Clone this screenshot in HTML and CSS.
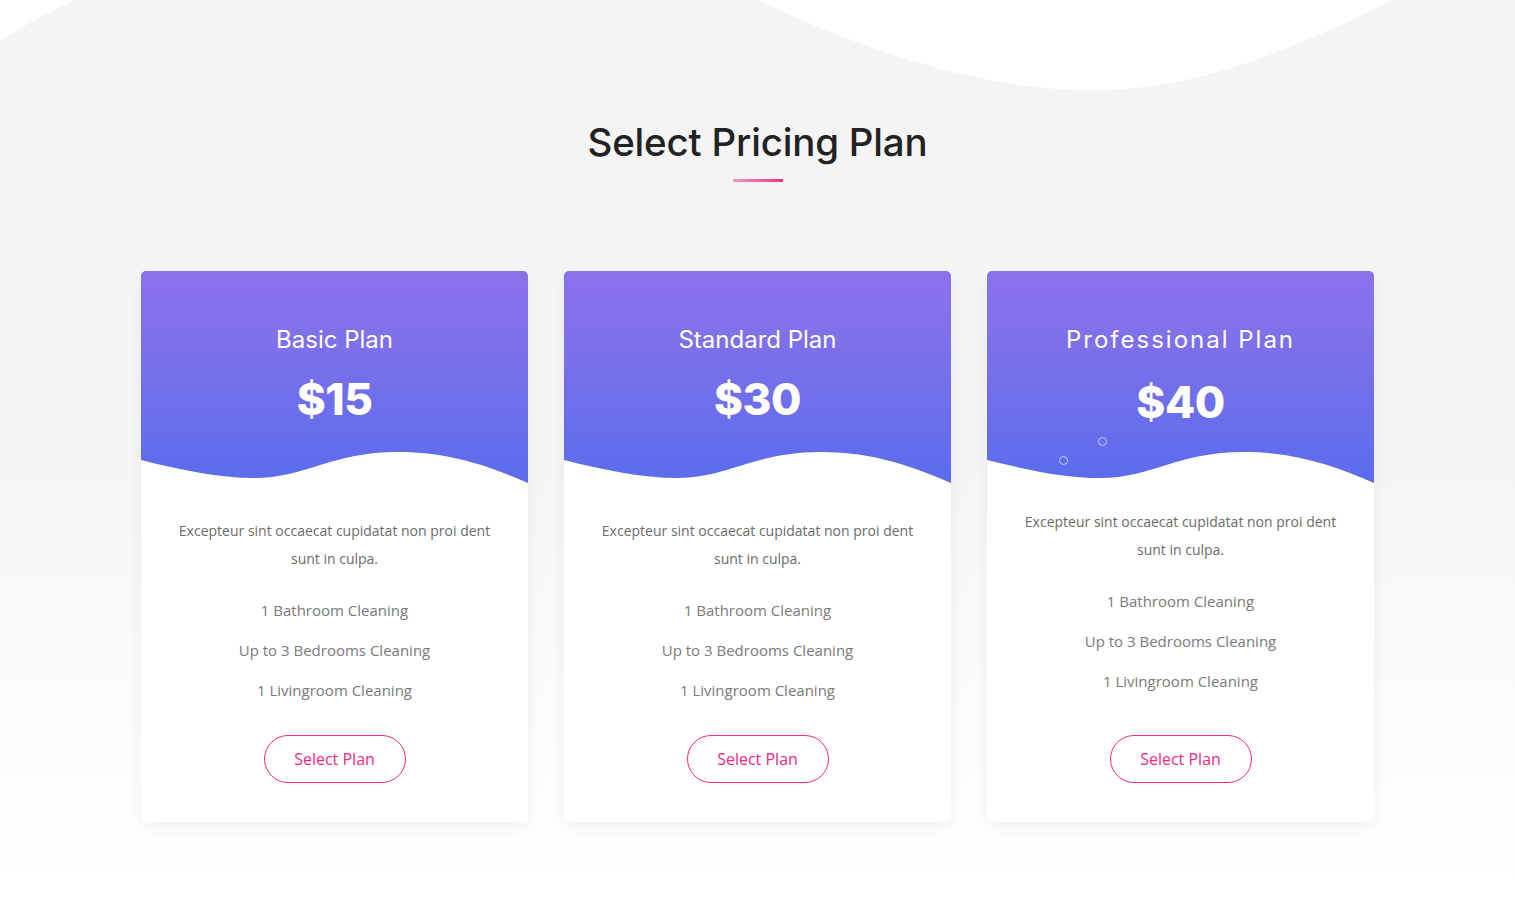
FILE: index.html
```html
<!DOCTYPE html>
<html lang="en">
<head>
    <meta charset="UTF-8">
    <meta name="viewport" content="width=device-width, initial-scale=1.0">
    <title>Select Pricing Plan</title>
    <link rel="stylesheet" href="styles.css">
</head>
<body>
    <section class="pricing">
        <!-- 배경 물결 -->
        <svg class="bgWave" viewBox="0 0 1515 100" preserveAspectRatio="none">
            <path d="M0,0 L76,0 C48,12 22,26 0,42 Z" fill="#fff"/>
            <path d="M757,0 C860,48 975,90 1092,90 C1205,90 1300,45 1393,0 Z" fill="#fff"/>
        </svg>

        <div class="title">
            <h2>Select Pricing Plan</h2>
            <span class="line"></span>
        </div>

        <div class="planList">
            <div class="card">
                <div class="cardHead">
                    <h3>Basic Plan</h3>
                    <p class="price">$15</p>
                    <svg class="headWave" viewBox="0 0 387 32" preserveAspectRatio="none">
                        <path d="M0,8 C40,18 78,26 113,26 C165,26 190,0 257,0 C310,0 350,15 387,31 L387,32 L0,32 Z" fill="#fff"/>
                    </svg>
                </div>
                <div class="cardBody">
                    <p class="desc">Excepteur sint occaecat cupidatat non proi dent sunt in culpa.</p>
                    <ul>
                        <li>1 Bathroom Cleaning</li>
                        <li>Up to 3 Bedrooms Cleaning</li>
                        <li>1 Livingroom Cleaning</li>
                    </ul>
                    <button class="selectBtn">Select Plan</button>
                </div>
            </div>

            <div class="card">
                <div class="cardHead">
                    <h3>Standard Plan</h3>
                    <p class="price">$30</p>
                    <svg class="headWave" viewBox="0 0 387 32" preserveAspectRatio="none">
                        <path d="M0,8 C40,18 78,26 113,26 C165,26 190,0 257,0 C310,0 350,15 387,31 L387,32 L0,32 Z" fill="#fff"/>
                    </svg>
                </div>
                <div class="cardBody">
                    <p class="desc">Excepteur sint occaecat cupidatat non proi dent sunt in culpa.</p>
                    <ul>
                        <li>1 Bathroom Cleaning</li>
                        <li>Up to 3 Bedrooms Cleaning</li>
                        <li>1 Livingroom Cleaning</li>
                    </ul>
                    <button class="selectBtn">Select Plan</button>
                </div>
            </div>

            <!-- 마우스 올린 카드 -->
            <div class="card active">
                <div class="cardHead">
                    <h3>Professional Plan</h3>
                    <p class="price">$40</p>
                    <span class="bubble b1"></span>
                    <span class="bubble b2"></span>
                    <svg class="headWave" viewBox="0 0 387 32" preserveAspectRatio="none">
                        <path d="M0,8 C40,18 78,26 113,26 C165,26 190,0 257,0 C310,0 350,15 387,31 L387,32 L0,32 Z" fill="#fff"/>
                    </svg>
                </div>
                <div class="cardBody">
                    <p class="desc">Excepteur sint occaecat cupidatat non proi dent sunt in culpa.</p>
                    <ul>
                        <li>1 Bathroom Cleaning</li>
                        <li>Up to 3 Bedrooms Cleaning</li>
                        <li>1 Livingroom Cleaning</li>
                    </ul>
                    <button class="selectBtn">Select Plan</button>
                </div>
            </div>
        </div>
    </section>
</body>
</html>
```

FILE: styles.css
```css
*{
    box-sizing: border-box;
}
body{
    margin: 0;
    font-family: "Open Sans", "Liberation Sans", sans-serif;
}
.pricing{
    position: relative;
    min-height: 903px;
    padding-top: 119px;
    background: linear-gradient(to bottom, #f4f4f4 0, #f5f5f5 470px, #ffffff 880px);
}
.bgWave{
    position: absolute;
    top: 0;
    left: 0;
    width: 100%;
    height: 100px;
    display: block;
}
/* 제목 */
.title{
    position: relative;
    display: flex;
    flex-direction: column;
    align-items: center;
}
.title h2{
    margin: 0;
    font-family: Inter, "Liberation Sans", sans-serif;
    font-size: 38.5px;
    font-weight: 500;
    line-height: 46px;
    letter-spacing: -0.2px;
    color: #222;
}
.line{
    display: block;
    width: 50px;
    height: 3px;
    margin-top: 14px;
    background: linear-gradient(to right, #f598bf, #f72c87);
}
/* 카드 목록 */
.planList{
    position: relative;
    display: grid;
    grid-template-columns: repeat(3, 387px);
    gap: 36px;
    justify-content: center;
    margin-top: 89px;
}
.card{
    background: #fff;
    border-radius: 5px;
    overflow: hidden;
    box-shadow: 0 6px 16px rgba(0, 0, 0, 0.05);
}
.cardHead{
    position: relative;
    padding-top: 54px;
    text-align: center;
    color: #fff;
    background: linear-gradient(to bottom, #8a71ea 0%, #8571ea 20%, #5a6cec 100%);
}
.cardHead h3{
    margin: 0;
    font-family: Inter, "Liberation Sans", sans-serif;
    font-size: 24px;
    font-weight: 400;
    line-height: 30px;
}
.price{
    margin: 19px 0 0;
    font-family: Inter, "Liberation Sans", sans-serif;
    font-size: 44px;
    font-weight: 800;
    line-height: 50px;
    letter-spacing: -0.5px;
}
.headWave{
    display: block;
    width: 100%;
    height: 32px;
    margin-top: 28px;
}
.cardBody{
    padding: 33px 30px 39px;
    text-align: center;
}
.desc{
    margin: 0 auto;
    max-width: 320px;
    font-size: 14px;
    line-height: 28px;
    color: #6b6b6b;
}
.cardBody ul{
    list-style: none;
    margin: 25px 0 0;
    padding: 0;
    display: flex;
    flex-direction: column;
    gap: 16px;
}
.cardBody li{
    font-size: 15px;
    line-height: 24px;
    color: #7a7a7a;
}
.selectBtn{
    margin-top: 33px;
    width: 142px;
    height: 48px;
    border: 1px solid #f5297f;
    border-radius: 24px;
    background: #fff;
    font-family: "Open Sans", "Liberation Sans", sans-serif;
    font-size: 16px;
    color: #f1287f;
    cursor: pointer;
}
/* 마우스 올린 상태 */
.active h3{
    letter-spacing: 2px;
}
.active .price{
    margin-top: 22px;
}
.active .headWave{
    margin-top: 25px;
}
.active .cardBody{
    padding-top: 24px;
}
.active .selectBtn{
    margin-top: 42px;
}
.bubble{
    position: absolute;
    width: 9px;
    height: 9px;
    border: 1.5px solid rgba(255, 255, 255, 0.6);
    border-radius: 50%;
}
.b1{
    left: 72px;
    top: 185px;
}
.b2{
    left: 111px;
    top: 166px;
}
```
